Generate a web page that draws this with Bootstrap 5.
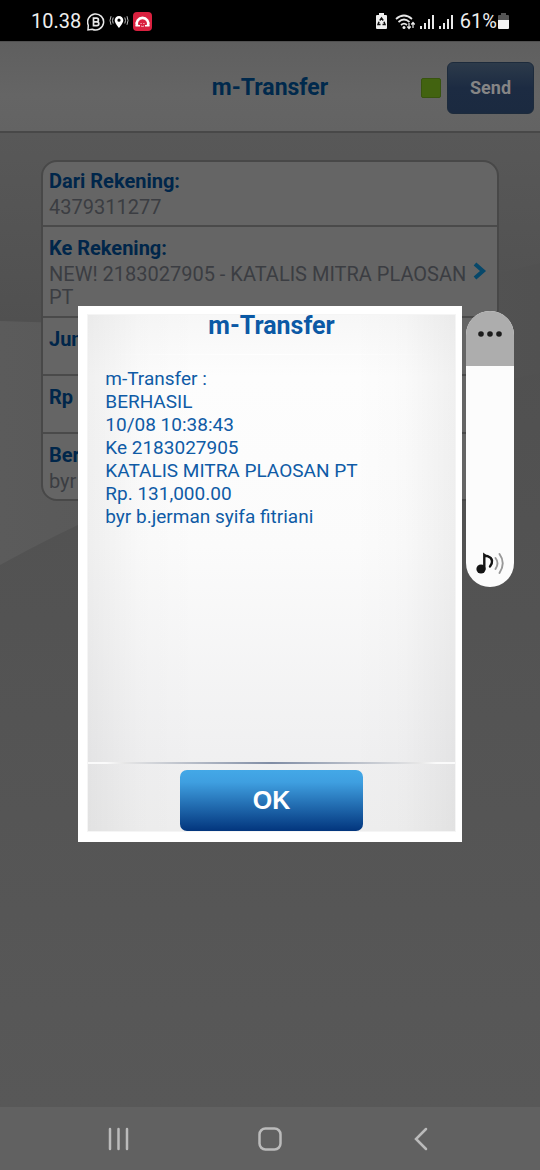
<!DOCTYPE html>
<html lang="id">
<head>
<meta charset="utf-8">
<meta name="viewport" content="width=device-width, initial-scale=1">
<title>m-Transfer</title>
<link href="https://cdn.jsdelivr.net/npm/bootstrap@5.3.0/dist/css/bootstrap.min.css" rel="stylesheet">
<style>
  body { font-family: Roboto, "Liberation Sans", sans-serif; font-size: 20px; line-height: 23px; background: #545454; }
  svg { display: block; flex: none; }

  /* phone status bar */
  .status { background: #000; color: #eee; height: 41px; padding: 2px 31px 0 31px; }
  .status .first { margin-left: 6px; }
  .status .pct { margin: 0 1px 0 6px; }

  /* app header */
  .app-head { height: 92px; background: linear-gradient(#5f5f5f, #656565 60%, #636363); border-top: 1px solid #505050; border-bottom: 2px solid #484848; padding: 2px 6px 0; }
  .app-head h1 { font-size: 23px; line-height: 28px; font-weight: 700; color: #00294c; }
  .side { flex: 1 1 0; }
  .led { width: 20px; height: 20px; border-radius: 2px; background: #426310; border: 1px solid #38540f; margin-right: 6px; }
  .btn-send { width: 87px; height: 52px; border-radius: 6px; border: 1px solid #1d2b3c; background: linear-gradient(#2c3a4a, #1c2b42 50%, #1b2a40); color: #858585; font-weight: 700; font-size: 18px; padding: 0; }

  /* backdrop of the form */
  .scene { inset: 0; width: 100%; height: 100%; }
  .form-card { margin: 27px 41px 0; border: 2px solid #484848; border-radius: 16px; background: #656565; overflow: hidden; }
  .entry { padding: 6px 10px 7px 6px; border-bottom: 2px solid #4a4a4a; color: #3b3d42; min-height: 58px; }
  .entry:first-child { padding-top: 4px; padding-bottom: 6px; }
  .entry:last-child { border-bottom: 0; padding-bottom: 6px; }
  .entry .cap { font-weight: 700; line-height: 30px; color: #00264a; }

  /* receipt dialog */
  .receipt { width: 71%; background: #fff; padding: 8px 6px 10px 9px; }
  .sheet { min-height: 518px; border: 1px solid #f5f5f5; background:
      linear-gradient(90deg, rgba(0,0,0,.05), rgba(0,0,0,.012) 14%, transparent 30%, transparent 72%, rgba(0,0,0,.012) 86%, rgba(0,0,0,.05)),
      linear-gradient(#f7f7f7, #fdfdfd 12%, #fbfbfb 45%, #f0f0f1 85%, #eee); }
  .sheet h2 { font-size: 25px; line-height: 28px; font-weight: 700; color: #0b59a5; margin: -3px 0 0; }
  .notice { font-size: 19px; color: #0f5ba6; padding: 12px 17px; }
  .rule { height: 2px; background: linear-gradient(90deg, #fafafa 5%, #e6e6e6 10%, #7f8ca4 50%, #e6e6e6 90%, #fafafa 95%); }
  .hair { height: 1px; margin: 14px 20px 0; background: linear-gradient(90deg, transparent, #fff, transparent); }
  .btn-ok { width: 50%; height: 61px; margin-top: 6px; border: 0; border-radius: 7px; background: linear-gradient(#43a8e7, #3f9fe0 20%, #02357d); color: #fff; font: 700 25px/30px "Liberation Sans", Arial, sans-serif; padding: 0 0 2px; }

  /* volume slider */
  .volume { right: 26px; top: 311px; width: 48px; border-radius: 24px; overflow: hidden; background: #fcfcfc; }
  .volume .more { height: 55px; background: #adadad; border: 0; padding: 0 0 9px; }
  .volume .level { height: 221px; padding-bottom: 12px; }

  .soft-nav { height: 63px; background: #616161; }
  .soft-nav button { background: none; border: 0; padding: 0; width: 28%; }
</style>
</head>
<body>
<div class="d-flex flex-column min-vh-100 position-relative">

  <div class="status d-flex align-items-center justify-content-between">
    <div class="d-flex align-items-center">
      <span>10.38</span>
      <svg class="first" width="18" height="18" viewBox="0 0 18 18" fill="none" stroke="#e8e8e8" stroke-width="1.500"><path d="M1 16.900 1.300 12.200A8 8 0 1 1 5.200 16.200Z"/><path d="M6.500 5.200H9.600a1.800 1.800 0 0 1 0 3.600H6.500ZM6.500 8.800h3.400a1.900 1.900 0 0 1 0 3.800H6.500Z" stroke-width="1.700"/></svg>
      <svg class="ms-1" width="20" height="16" viewBox="0 0 20 16"><path fill="#fff" fill-rule="evenodd" d="M10 2a4.300 4.300 0 0 0-4.300 4.300C5.700 9.500 10 14 10 14s4.300-4.500 4.300-7.700A4.300 4.300 0 0 0 10 2Zm0 2.600a1.600 1.600 0 1 1 0 3.200 1.600 1.600 0 0 1 0-3.200Z"/><path d="M4.200 3.500q-1.400 3 0 6M2 2.200q-2 4.300 0 8.600M15.800 3.500q1.400 3 0 6M18 2.200q2 4.300 0 8.600" fill="none" stroke="#bbb" stroke-width="1"/></svg>
      <svg class="ms-1" width="19" height="19" viewBox="0 0 19 19"><rect width="19" height="19" rx="4" fill="#d9213f"/><path d="M4 13.500A5.800 5.800 0 1 1 15 13.500" fill="none" stroke="#fff" stroke-width="2.600"/><path d="M2.500 13.800H7M12 13.800h4.500" stroke="#fff" stroke-width="1.500"/><path d="M7.500 11.500h1.200M10.300 11.500h1.200M8 14q1.500 1 3 0" fill="none" stroke="#f8bcc6"/></svg>
    </div>
    <div class="d-flex align-items-center">
      <svg width="11" height="17" viewBox="0 0 11 17"><path fill="#eee" d="M3 0h5v2h2q1 0 1 1v12q0 1-1 1H1q-1 0-1-1V3q0-1 1-1h2Z"/><path d="M3.800 7.500 5.500 5l1.700 2.500M8 8.800l1 2.700H6.500M4.500 11.500H2l1-2.700" fill="none" stroke="#111" stroke-width="1.500"/></svg>
      <svg class="ms-2" width="21" height="16" viewBox="0 0 21 16"><path d="M1 5Q9-2 17 5M3.500 8Q9 3 14.500 8M6 11q3-2.600 6 0" fill="none" stroke="#e8e8e8" stroke-width="1.700"/><circle cx="9" cy="13.500" r="1.500" fill="#eee"/><path d="M14 9v5M12.300 12.500 14 14.500l1.700-2M18 14V9M16.300 10.500 18 8.500l1.700 2" fill="none" stroke="#eee" stroke-width="1.200"/></svg>
      <svg class="ms-1" width="15" height="16" viewBox="0 0 15 16" fill="#e8e8e8"><path d="M0 12h2v3H0ZM4 9h2v6H4ZM8 5h2v10H8ZM12 1h2v14h-2Z"/></svg>
      <svg class="ms-1" width="15" height="16" viewBox="0 0 15 16" fill="#e8e8e8"><path d="M0 12h2v3H0ZM4 9h2v6H4ZM8 5h2v10H8ZM12 1h2v14h-2Z"/></svg>
      <span class="pct">61%</span>
      <svg width="11" height="17" viewBox="0 0 11 17"><path fill="#555" d="M3 0h5v2h2q1 0 1 1v4H0V3q0-1 1-1h2Z"/><path fill="#f2f2f2" d="M0 7h11v8q0 1-1 1H1q-1 0-1-1Z"/></svg>
    </div>
  </div>

  <header class="app-head d-flex align-items-center">
    <div class="side"></div>
    <h1 class="m-0">m-Transfer</h1>
    <div class="side d-flex align-items-center justify-content-end">
      <span class="led"></span>
      <button type="button" class="btn btn-send">Send</button>
    </div>
  </header>

  <main class="flex-grow-1 position-relative">
    <svg class="scene position-absolute" viewBox="0 0 540 974" preserveAspectRatio="none" aria-hidden="true">
      <defs>
        <linearGradient id="low" x2="0" y2="1"><stop offset="0" stop-color="#4e4e4e"/><stop offset="1" stop-color="#585858"/></linearGradient>
        <linearGradient id="top" x2="0" y2="1"><stop offset="0" stop-color="#585858"/><stop offset="1" stop-color="#505050"/></linearGradient>
        <linearGradient id="band" x2="1" y2="0"><stop offset="0" stop-color="#5b5b5b"/><stop offset="1" stop-color="#515151"/></linearGradient>
      </defs>
      <rect width="540" height="974" fill="url(#low)"/>
      <rect width="540" height="190" fill="url(#top)"/>
      <path d="M0 188Q270 200 540 130V240Q220 310 0 432Z" fill="url(#band)"/>
    </svg>

    <div class="form-card position-relative">
      <div class="entry"><div class="cap">Dari Rekening:</div><div>4379311277</div></div>
      <div class="entry d-flex align-items-center justify-content-between">
        <div><div class="cap">Ke Rekening:</div><div>NEW! 2183027905 - KATALIS MITRA PLAOSAN PT</div></div>
        <svg width="14" height="20" viewBox="0 0 14 20"><path d="M2 3l8 7-8 7" fill="none" stroke="#07486a" stroke-width="4"/></svg>
      </div>
      <div class="entry"><div class="cap">Jumlah</div></div>
      <div class="entry"><div class="cap">Rp</div></div>
      <div class="entry"><div class="cap">Berita</div><div>byr</div></div>
    </div>

  </main>

  <nav class="soft-nav d-flex align-items-center justify-content-center position-relative">
    <button type="button" aria-label="Recents"><svg class="mx-auto" width="22" height="24" viewBox="0 0 22 24"><path d="M2 2v20M10.500 2v20M19 2v20" stroke="#bbb" stroke-width="2.500" stroke-linecap="round"/></svg></button>
    <button type="button" aria-label="Home"><svg class="mx-auto" width="24" height="24" viewBox="0 0 24 24"><rect x="1.500" y="1.500" width="21" height="21" rx="6" fill="none" stroke="#bbb" stroke-width="2.500"/></svg></button>
    <button type="button" aria-label="Back"><svg class="mx-auto" width="14" height="24" viewBox="0 0 14 24"><path d="M12 2 2 12l10 10" fill="none" stroke="#bbb" stroke-width="2.500" stroke-linecap="round"/></svg></button>
  </nav>

  <!-- 41px status bar above and 63px navigation below stay clear of the dialog -->
  <div class="position-absolute top-0 start-0 w-100 h-100 d-flex align-items-center justify-content-center pe-none" style="padding:41px 0 63px">
    <section class="receipt pe-auto" role="dialog" aria-labelledby="receiptTitle">
      <div class="sheet d-flex flex-column">
        <h2 class="text-center" id="receiptTitle">m-Transfer</h2>
        <div class="hair"></div>
        <div class="notice flex-grow-1">m-Transfer :<br>BERHASIL<br>10/08 10:38:43<br>Ke 2183027905<br>KATALIS MITRA PLAOSAN PT<br>Rp. 131,000.00<br>byr b.jerman syifa fitriani</div>
        <div class="rule"></div>
        <button type="button" class="btn btn-ok align-self-center">OK</button>
      </div>
    </section>
  </div>

  <aside class="volume position-absolute d-flex flex-column">
    <button type="button" class="more d-flex align-items-center justify-content-center" aria-label="More"><svg width="26" height="6" viewBox="0 0 26 6" fill="#1c1c1c"><circle cx="4" cy="3" r="2.800"/><circle cx="13" cy="3" r="2.800"/><circle cx="22" cy="3" r="2.800"/></svg></button>
    <div class="level d-flex align-items-end justify-content-center">
      <svg width="30" height="24" viewBox="0 0 30 24" fill="none" stroke-linecap="round"><circle cx="6" cy="18" r="4.600" fill="#151515"/><path d="M9.300 18V4Q10.500 5 13 5.300C18 7 18 12 15 15.500" stroke="#151515" stroke-width="2.400"/><path d="M20.500 7q4 5 0 11M24.500 3q6.500 9 0 19" stroke="#999" stroke-width="1.900"/></svg>
    </div>
  </aside>
</div>
<script src="https://cdn.jsdelivr.net/npm/bootstrap@5.3.0/dist/js/bootstrap.bundle.min.js"></script>
</body>
</html>
